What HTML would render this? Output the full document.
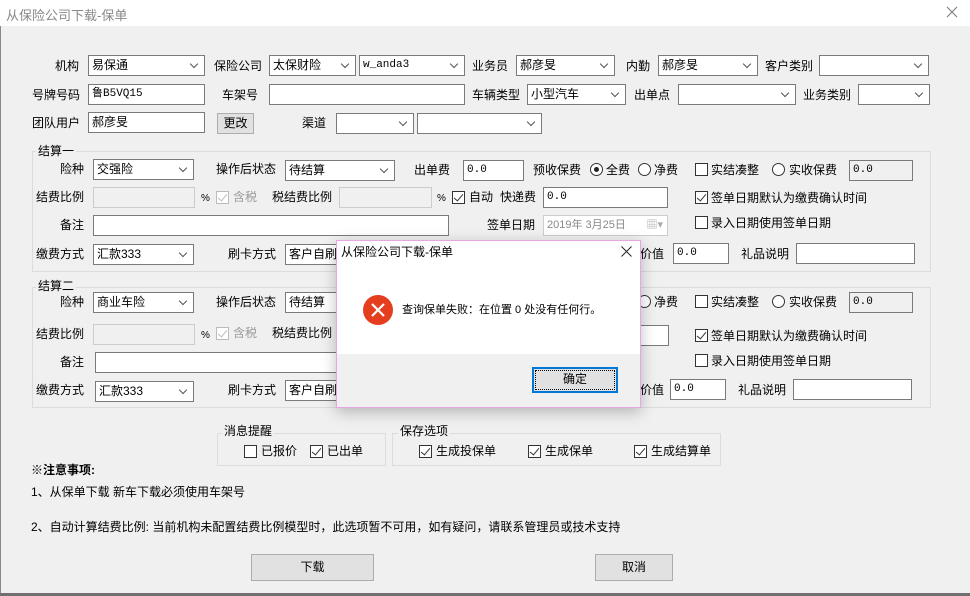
<!DOCTYPE html>
<html><head><meta charset="utf-8">
<style>
*{box-sizing:border-box;margin:0;padding:0}
body{width:970px;height:596px;overflow:hidden;background:#f0f0f0;font-family:"Liberation Sans","Noto Sans CJK SC",sans-serif;font-size:12px;color:#000;position:relative}
.a{position:absolute;white-space:nowrap}
.l{position:absolute;white-space:nowrap;line-height:20px}
.tb,.cb{position:absolute;background:#fff;border:1px solid #7a7a7a;height:21px;line-height:19px;padding-left:3px;font-size:12px;white-space:nowrap;overflow:hidden}
.cb::after{content:"";position:absolute;right:7px;top:5px;width:5px;height:5px;border-right:1px solid #555;border-bottom:1px solid #555;transform:rotate(45deg)}
.dis{background:#f0f0f0;border-color:#ccc;color:#6d6d6d}
.mono{font-family:"Liberation Mono","Noto Sans CJK SC",monospace;font-size:11px}
.chk{position:absolute;width:13px;height:13px;border:1px solid #333;background:#fff}
.chk.on::after{content:"";position:absolute;left:3px;top:0px;width:4px;height:8px;border-right:1.5px solid #333;border-bottom:1.5px solid #333;transform:rotate(40deg)}
.chk.dim{border-color:#bbb}.chk.dim::after{border-color:#bbb}
.rad{position:absolute;width:13px;height:13px;border:1px solid #333;border-radius:50%;background:#fff}
.rad.on::after{content:"";position:absolute;left:3px;top:3px;width:5px;height:5px;border-radius:50%;background:#222}
.grp{position:absolute;border:1px solid #dcdcdc}
.gt{position:absolute;background:#f0f0f0;padding:0 2px;line-height:14px}
.btn{position:absolute;background:#e1e1e1;border:1px solid #adadad;text-align:center}
</style></head><body>
<div class="a" style="left:0;top:0;width:970px;height:26px;background:#fff"></div>
<div class="a" style="left:6px;top:5px;color:#888;font-size:13px">从保险公司下载-保单</div>
<svg class="a" style="left:946px;top:6px" width="12" height="12"><path d="M1 1L11 11M11 1L1 11" stroke="#777" stroke-width="1"/></svg>
<div class="a" style="left:0;top:26px;width:1px;height:570px;background:#888"></div>
<div class="a" style="left:0;top:593px;width:970px;height:3px;background:#707070"></div>

<div class="l" style="left:55px;top:56px">机构</div>
<div class="cb" style="left:88px;top:55px;width:117px">易保通</div>
<div class="l" style="left:214px;top:56px">保险公司</div>
<div class="cb" style="left:269px;top:55px;width:87px">太保财险</div>
<div class="cb mono" style="left:359px;top:55px;width:106px">w_anda3</div>
<div class="l" style="left:472px;top:56px">业务员</div>
<div class="cb" style="left:516px;top:55px;width:99px">郝彦旻</div>
<div class="l" style="left:626px;top:56px">内勤</div>
<div class="cb" style="left:658px;top:55px;width:100px">郝彦旻</div>
<div class="l" style="left:765px;top:56px">客户类别</div>
<div class="cb" style="left:819px;top:55px;width:110px"></div>
<div class="l" style="left:32px;top:85px">号牌号码</div>
<div class="tb mono" style="left:88px;top:84px;width:117px">鲁B5VQ15</div>
<div class="l" style="left:222px;top:85px">车架号</div>
<div class="tb" style="left:269px;top:84px;width:196px"></div>
<div class="l" style="left:472px;top:85px">车辆类型</div>
<div class="cb" style="left:527px;top:84px;width:99px">小型汽车</div>
<div class="l" style="left:634px;top:85px">出单点</div>
<div class="cb" style="left:678px;top:84px;width:118px"></div>
<div class="l" style="left:803px;top:85px">业务类别</div>
<div class="cb" style="left:858px;top:84px;width:72px"></div>
<div class="l" style="left:32px;top:113px">团队用户</div>
<div class="tb" style="left:88px;top:112px;width:117px">郝彦旻</div>
<div class="btn" style="left:217px;top:113px;width:37px;height:21px;line-height:19px">更改</div>
<div class="l" style="left:302px;top:113px">渠道</div>
<div class="cb" style="left:336px;top:113px;width:78px"></div>
<div class="cb" style="left:417px;top:113px;width:125px"></div>

<div class="grp" style="left:32px;top:151px;width:899px;height:121px"></div>
<div class="gt" style="left:36px;top:144px">结算一</div>
<div class="l" style="left:60px;top:159px">险种</div>
<div class="cb" style="left:93px;top:159px;width:101px">交强险</div>
<div class="l" style="left:216px;top:159px">操作后状态</div>
<div class="cb" style="left:285px;top:160px;width:110px">待结算</div>
<div class="l" style="left:414px;top:160px">出单费</div>
<div class="tb mono" style="left:463px;top:160px;width:61px">0.0</div>
<div class="l" style="left:533px;top:160px">预收保费</div>
<div class="rad on" style="left:590px;top:163px"></div><div class="l" style="left:606px;top:160px">全费</div>
<div class="rad" style="left:638px;top:163px"></div><div class="l" style="left:654px;top:160px">净费</div>
<div class="chk" style="left:695px;top:163px"></div><div class="l" style="left:711px;top:160px">实结凑整</div>
<div class="rad" style="left:772px;top:163px"></div><div class="l" style="left:789px;top:160px">实收保费</div>
<div class="tb dis mono" style="left:849px;top:160px;width:64px;color:#000;border-color:#7a7a7a">0.0</div>

<div class="l" style="left:36px;top:187px">结费比例</div>
<div class="tb dis" style="left:93px;top:187px;width:102px"></div>
<div class="l" style="left:201px;top:189px;font-size:10px">%</div>
<div class="chk on dim" style="left:216px;top:191px"></div><div class="l" style="left:233px;top:187px;color:#999">含税</div>
<div class="l" style="left:272px;top:187px">税结费比例</div>
<div class="tb dis" style="left:339px;top:187px;width:93px"></div>
<div class="l" style="left:437px;top:189px;font-size:10px">%</div>
<div class="chk on" style="left:452px;top:191px"></div><div class="l" style="left:469px;top:187px">自动</div>
<div class="l" style="left:500px;top:187px">快递费</div>
<div class="tb mono" style="left:543px;top:187px;width:125px">0.0</div>
<div class="chk on" style="left:695px;top:191px"></div><div class="l" style="left:711px;top:188px">签单日期默认为缴费确认时间</div>

<div class="l" style="left:60px;top:215px">备注</div>
<div class="tb" style="left:93px;top:215px;width:356px"></div>
<div class="l" style="left:487px;top:215px">签单日期</div>
<div class="tb dis" style="left:543px;top:215px;width:125px;background:#fff;font-size:11px;color:#888">2019年  3月25日 <span style="position:absolute;right:4px;color:#aaa">▦▾</span></div>
<div class="chk" style="left:695px;top:216px"></div><div class="l" style="left:711px;top:213px">录入日期使用签单日期</div>

<div class="l" style="left:36px;top:244px">缴费方式</div>
<div class="cb" style="left:93px;top:244px;width:101px">汇款333</div>
<div class="l" style="left:228px;top:244px">刷卡方式</div>
<div class="cb" style="left:285px;top:244px;width:110px">客户自刷</div>
<div class="l" style="left:640px;top:244px">价值</div>
<div class="tb mono" style="left:673px;top:243px;width:56px">0.0</div>
<div class="l" style="left:741px;top:244px">礼品说明</div>
<div class="tb" style="left:796px;top:243px;width:119px"></div>

<div class="grp" style="left:32px;top:287px;width:899px;height:121px"></div>
<div class="gt" style="left:36px;top:279px">结算二</div>
<div class="l" style="left:60px;top:292px">险种</div>
<div class="cb" style="left:93px;top:292px;width:101px">商业车险</div>
<div class="l" style="left:216px;top:292px">操作后状态</div>
<div class="cb" style="left:285px;top:292px;width:110px">待结算</div>
<div class="rad" style="left:638px;top:295px"></div><div class="l" style="left:654px;top:292px">净费</div>
<div class="chk" style="left:695px;top:295px"></div><div class="l" style="left:711px;top:292px">实结凑整</div>
<div class="rad" style="left:772px;top:295px"></div><div class="l" style="left:789px;top:292px">实收保费</div>
<div class="tb dis mono" style="left:849px;top:292px;width:64px;color:#000;border-color:#7a7a7a">0.0</div>

<div class="l" style="left:36px;top:324px">结费比例</div>
<div class="tb dis" style="left:93px;top:324px;width:102px"></div>
<div class="l" style="left:201px;top:326px;font-size:10px">%</div>
<div class="chk on dim" style="left:216px;top:327px"></div><div class="l" style="left:233px;top:323px;color:#999">含税</div>
<div class="l" style="left:272px;top:323px">税结费比例</div>
<div class="tb" style="left:640px;top:325px;width:29px"></div>
<div class="chk on" style="left:695px;top:329px"></div><div class="l" style="left:711px;top:326px">签单日期默认为缴费确认时间</div>

<div class="l" style="left:60px;top:352px">备注</div>
<div class="tb" style="left:95px;top:352px;width:260px"></div>
<div class="chk" style="left:695px;top:354px"></div><div class="l" style="left:711px;top:351px">录入日期使用签单日期</div>

<div class="l" style="left:36px;top:380px">缴费方式</div>
<div class="cb" style="left:95px;top:381px;width:99px">汇款333</div>
<div class="l" style="left:228px;top:380px">刷卡方式</div>
<div class="cb" style="left:285px;top:380px;width:110px">客户自刷</div>
<div class="l" style="left:640px;top:380px">价值</div>
<div class="tb mono" style="left:670px;top:379px;width:56px">0.0</div>
<div class="l" style="left:738px;top:380px">礼品说明</div>
<div class="tb" style="left:793px;top:379px;width:119px"></div>

<div class="grp" style="left:217px;top:433px;width:169px;height:33px"></div>
<div class="gt" style="left:222px;top:424px">消息提醒</div>
<div class="chk" style="left:244px;top:445px"></div><div class="l" style="left:261px;top:441px">已报价</div>
<div class="chk on" style="left:310px;top:445px"></div><div class="l" style="left:327px;top:441px">已出单</div>
<div class="grp" style="left:392px;top:433px;width:329px;height:33px"></div>
<div class="gt" style="left:398px;top:424px">保存选项</div>
<div class="chk on" style="left:419px;top:445px"></div><div class="l" style="left:436px;top:441px">生成投保单</div>
<div class="chk on" style="left:528px;top:445px"></div><div class="l" style="left:545px;top:441px">生成保单</div>
<div class="chk on" style="left:634px;top:445px"></div><div class="l" style="left:651px;top:441px">生成结算单</div>

<div class="a" style="left:31px;top:461px;font-weight:bold;line-height:18px">※注意事项:</div>
<div class="a" style="left:31px;top:484px;line-height:16px">1、从保单下载 新车下载必须使用车架号</div>
<div class="a" style="left:31px;top:519px;line-height:16px">2、自动计算结费比例: 当前机构未配置结费比例模型时，此选项暂不可用，如有疑问，请联系管理员或技术支持</div>
<div class="btn" style="left:251px;top:554px;width:123px;height:27px;line-height:25px">下载</div>
<div class="btn" style="left:595px;top:554px;width:78px;height:27px;line-height:25px">取消</div>

<div class="a" style="left:336px;top:240px;width:305px;height:168px;background:#fff;border:1px solid #e6a6e6;box-shadow:0 4px 14px rgba(0,0,0,.25)">
  <div class="a" style="left:4px;top:4px;font-size:12px;line-height:14px">从保险公司下载-保单</div>
  <svg class="a" style="left:284px;top:5px" width="11" height="11"><path d="M0.5 0.5L10.5 10.5M10.5 0.5L0.5 10.5" stroke="#222" stroke-width="1"/></svg>
  <div class="a" style="left:26px;top:54px;width:30px;height:30px;border-radius:50%;background:#e53e1e"></div>
  <svg class="a" style="left:26px;top:54px" width="30" height="30"><path d="M9 9L21 21M21 9L9 21" stroke="#fff" stroke-width="2.2"/></svg>
  <div class="a" style="left:65px;top:62px;font-size:11px;line-height:14px">查询保单失败：在位置 0 处没有任何行。</div>
  <div class="a" style="left:0;top:113px;width:303px;height:53px;background:#f0f0f0"></div>
  <div class="a" style="left:195px;top:126px;width:86px;height:26px;border:2px solid #0078d7;background:#e1e1e1;text-align:center;line-height:20px;font-size:12px;outline:1px dotted #000;outline-offset:-4px">确定</div>
</div>
</body></html>
